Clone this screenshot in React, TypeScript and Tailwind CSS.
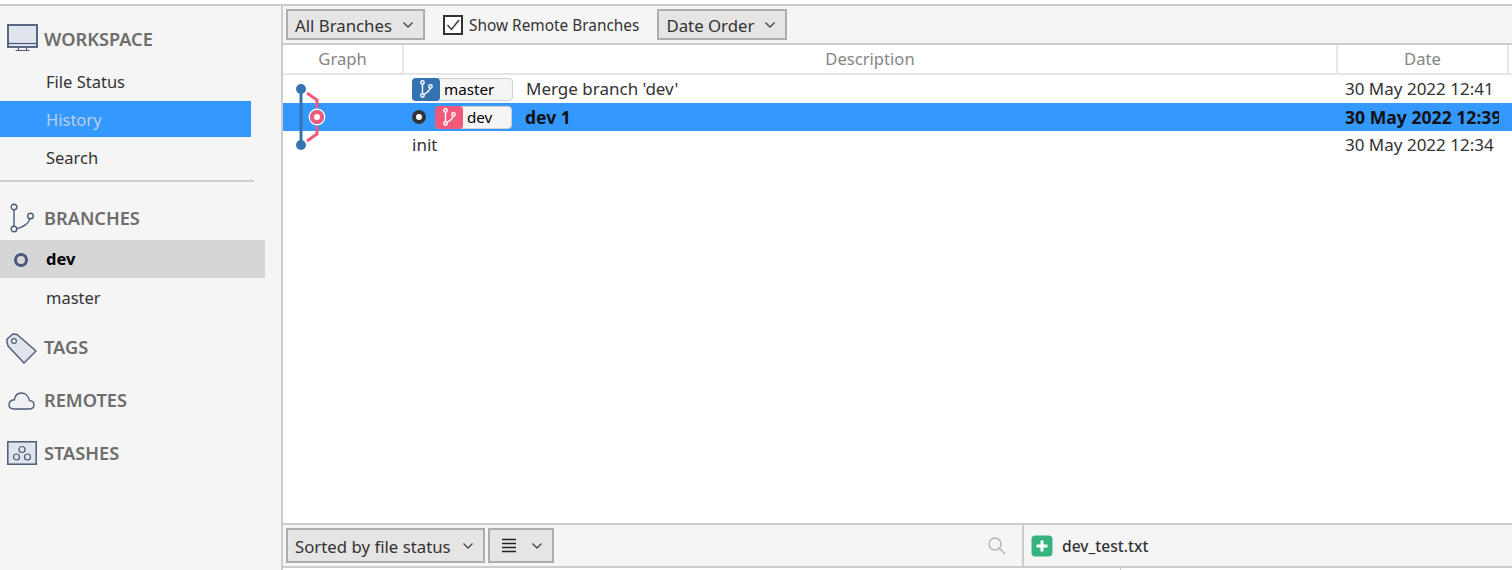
import React from "react";

const font = { fontFamily: '"Noto Sans", "Open Sans", sans-serif' };

const Chevron = ({ className = "" }: { className?: string }) => (
  <svg width="12" height="8" viewBox="0 0 12 8" className={className}>
    <path d="M1.5 1.5 L6 6 L10.5 1.5" fill="none" stroke="#444" strokeWidth="1.3" />
  </svg>
);

const BranchGlyph = ({ color = "#fff" }: { color?: string }) => (
  <svg width="16" height="18" viewBox="0 0 16 18">
    <g fill="none" stroke={color} strokeWidth="1.4">
      <circle cx="4.5" cy="2.5" r="1.7" />
      <circle cx="4.5" cy="15.5" r="1.7" />
      <circle cx="12.5" cy="6.5" r="1.7" />
      <path d="M4.5 4.2 V13.8" />
      <path d="M12 8.2 C11.4 11.5 8.5 13 6 14.4" />
    </g>
  </svg>
);

function SelectBox({ label, className = "" }: { label: string; className?: string }) {
  return (
    <div className={`flex items-center justify-between border-2 border-[#adadad] bg-[#e5e5e5] pl-[7px] text-[#333] ${className}`}>
      <span className="pt-[2px]">{label}</span>
      <Chevron className="mr-[9px]" />
    </div>
  );
}

function SectionHead({ icon, label, className = "" }: { icon: React.ReactNode; label: string; className?: string }) {
  return (
    <div className={`flex items-center ${className}`}>
      <div className="flex w-[44px] shrink-0 justify-center">{icon}</div>
      <span className="text-[18.2px] font-semibold text-[#6d6d6d]">{label}</span>
    </div>
  );
}

function Sidebar() {
  return (
    <aside className="flex w-[281px] shrink-0 flex-col bg-[#f5f5f5] text-[16.5px] text-[#333]">
      <SectionHead
        className="mt-[18px] h-[32px]"
        label="WORKSPACE"
        icon={
          <svg width="31" height="28" viewBox="0 0 31 28" className="mb-[4px] ml-[1px]">
            <rect x="1" y="1" width="29" height="22" fill="#e0e4ec" stroke="#4a5a78" strokeWidth="1.8" />
            <path d="M1 19.5 H30" stroke="#4a5a78" strokeWidth="1.2" />
            <path d="M11.5 23 V26 M19.5 23 V26 M8.5 26.5 H22.5" stroke="#4a5a78" strokeWidth="1.2" />
          </svg>
        }
      />
      <div className="mt-[10px] flex h-[33px] w-[251px] items-center pl-[46px]">File Status</div>
      <div className="mt-[2px] flex h-[36px] w-[251px] items-center bg-[#3399ff] pl-[46px] pt-[2px] text-[#bccce6]">History</div>
      <div className="flex h-[42px] w-[251px] items-center pl-[46px]">Search</div>
      <div className="mt-[1px] h-[2px] w-[254px] bg-[#cfcfcf]" />
      <SectionHead
        className="mt-[20px] h-[34px]"
        label="BRANCHES"
        icon={
          <svg width="26" height="32" viewBox="0 0 26 32" className="-ml-[2px]">
            <g fill="none" stroke="#4a5a78" strokeWidth="1.4">
              <circle cx="6" cy="4" r="2.8" />
              <circle cx="6" cy="26" r="2.8" />
              <circle cx="22.5" cy="13" r="2.8" />
              <path d="M6 6.8 V23.2" />
              <path d="M21.8 15.8 C21 20 15 24.5 8.7 25.6" />
            </g>
          </svg>
        }
      />
      <div className="mt-[4px] flex h-[38px] w-[265px] items-center bg-[#d6d6d6] pt-[1px] font-bold text-black">
        <span className="ml-[14px] mr-[18px] h-[14px] w-[14px] rounded-full border-[3px] border-[#4a5a78]" />
        dev
      </div>
      <div className="flex h-[39px] items-center pl-[46px] pt-[1px]">master</div>
      <SectionHead
        className="mt-[15px] h-[32px]"
        label="TAGS"
        icon={
          <svg width="31" height="31" viewBox="0 0 31 31" className="-ml-[1px]">
            <path d="M1 9 L1 6 L7 1 L11 1.5 L30 18 L18 30 L2 13 Z" fill="#e0e4ec" stroke="#4a5a78" strokeWidth="1.4" strokeLinejoin="round" />
            <circle cx="8" cy="8" r="2.4" fill="#f5f5f5" stroke="#4a5a78" strokeWidth="1.2" />
          </svg>
        }
      />
      <SectionHead
        className="mt-[21px] h-[32px]"
        label="REMOTES"
        icon={
          <svg width="27" height="18" viewBox="0 0 27 18" className="-ml-[1px]">
            <path d="M6 17 H21.5 C24.5 17 26 15 26 12.8 C26 10.5 24.2 8.6 21.5 8.6 C20.5 3.6 17 1 13.5 1 C9.8 1 7 3.6 6.4 7.8 C3 8.2 1 10.3 1 12.8 C1 15.2 3 17 6 17 Z" fill="#f0f1f4" stroke="#4a5a78" strokeWidth="1.4" />
          </svg>
        }
      />
      <SectionHead
        className="mt-[21px] h-[32px]"
        label="STASHES"
        icon={
          <svg width="30" height="24" viewBox="0 0 30 24" className="-ml-[1px] mb-[2px]">
            <rect x="0.8" y="0.8" width="28.4" height="22.4" fill="#e0e4ec" stroke="#4a5a78" strokeWidth="1.5" />
            <g fill="none" stroke="#4a5a78" strokeWidth="1.2">
              <circle cx="15" cy="8.5" r="3" />
              <circle cx="9.5" cy="16" r="3" />
              <circle cx="20.5" cy="16" r="3" />
            </g>
          </svg>
        }
      />
    </aside>
  );
}

function Graph() {
  return (
    <svg width="60" height="84" viewBox="0 0 60 84" className="pointer-events-none absolute left-0 top-0">
      <path d="M18 14 V70" stroke="#3572b0" strokeWidth="3" />
      <path d="M24 18 L34 25 V33 M34 51 V59 L24 66" fill="none" stroke="#f0597a" strokeWidth="3" />
      <circle cx="18" cy="14" r="5" fill="#3572b0" />
      <circle cx="18" cy="70" r="5" fill="#3572b0" />
      <circle cx="34" cy="42" r="7.7" fill="none" stroke="#fff" strokeWidth="1.4" />
      <circle cx="34" cy="42" r="5" fill="#fff" stroke="#f0597a" strokeWidth="4" />
    </svg>
  );
}

function RefTag({ label, color, className = "" }: { label: string; color: string; className?: string }) {
  return (
    <div className={`flex h-[23px] items-center rounded-[4px] border border-[#cfcfcf] bg-[#f5f5f5] ${className}`}>
      <div className="-ml-[1px] flex h-[23px] w-[28px] items-center justify-center rounded-[4px]" style={{ backgroundColor: color }}>
        <BranchGlyph />
      </div>
      <span className="ml-[4px] pt-[2px] text-[15.2px] leading-none text-black">{label}</span>
    </div>
  );
}

function HistoryTable() {
  return (
    <div className="relative flex-1 bg-white text-[17px] text-[#333]">
      <div className="flex h-[30px] border-b-2 border-[#e6e6e6] text-[16.6px] text-[#858585]">
        <div className="flex w-[119px] items-center justify-center">Graph</div>
        <div className="flex flex-1 items-center justify-center border-x-2 border-[#e6e6e6]">Description</div>
        <div className="flex w-[171px] items-center justify-center border-r-2 border-[#e6e6e6]">Date</div>
        <div className="w-[3px]" />
      </div>
      <div className="relative">
        <div className="flex h-[28px] items-center">
          <div className="w-[129px] shrink-0" />
          <RefTag label="master" color="#3572b0" className="w-[101px]" />
          <span className="ml-[13px] flex-1">Merge branch 'dev'</span>
          <span className="w-[167px] shrink-0 overflow-hidden whitespace-nowrap">30 May 2022 12:41</span>
        </div>
        <div className="flex h-[28px] items-center bg-[#3399ff] font-bold text-[#111]">
          <div className="w-[129px] shrink-0" />
          <span className="mr-[9px] h-[14px] w-[14px] rounded-full border-[4px] border-[#333] bg-white" />
          <RefTag label="dev" color="#f0597a" className="w-[77px] font-normal" />
          <span className="ml-[13px] flex-1 text-[17.5px]">dev 1</span>
          <span className="mr-[13px] w-[154px] shrink-0 overflow-hidden whitespace-nowrap text-[17.6px]">30 May 2022 12:39</span>
        </div>
        <div className="flex h-[28px] items-center">
          <div className="w-[129px] shrink-0" />
          <span className="flex-1">init</span>
          <span className="w-[167px] shrink-0 overflow-hidden whitespace-nowrap">30 May 2022 12:34</span>
        </div>
        <Graph />
      </div>
    </div>
  );
}

export default function App() {
  return (
    <div className="h-[570px] w-[1512px] overflow-hidden bg-white" style={font}>
      <div className="h-[4px] bg-white" />
      <div className="flex h-[566px] border-t-2 border-[#cccccc]">
        <Sidebar />
        <main className="flex flex-1 flex-col border-l-2 border-[#cccccc]">
          <div className="flex h-[39px] shrink-0 items-center border-b-2 border-[#cccccc] bg-[#f5f5f5] pl-[3px] text-[16.8px] text-[#333]">
            <SelectBox label="All Branches" className="h-[31px] w-[139px]" />
            <svg width="20" height="20" viewBox="0 0 20 20" className="ml-[18px]">
              <rect x="1" y="1" width="18" height="18" fill="#fff" stroke="#333" strokeWidth="2" />
              <path d="M4.5 10 L8.5 14.5 L16 5" fill="none" stroke="#333" strokeWidth="1.4" />
            </svg>
            <span className="ml-[6px] pt-[2px] text-[15.4px] text-[#333]">Show Remote Branches</span>
            <SelectBox label="Date Order" className="ml-[18px] h-[31px] w-[130px]" />
          </div>
          <HistoryTable />
          <div className="flex h-[45px] shrink-0 border-y-2 border-[#cccccc] bg-[#f5f5f5] text-[16.8px] text-[#333]">
            <div className="flex w-[741px] items-center border-r-2 border-[#cccccc] pl-[3px]">
              <SelectBox label="Sorted by file status" className="h-[35px] w-[199px]" />
              <div className="ml-[3px] flex h-[35px] w-[66px] items-center justify-between border-2 border-[#adadad] bg-[#e5e5e5] pl-[11px]">
                <svg width="16" height="15" viewBox="0 0 16 15">
                  <path d="M1 1.5 H15 M1 5.5 H15 M1 9.5 H15 M1 13.5 H15" stroke="#222" strokeWidth="1.4" />
                </svg>
                <Chevron className="mr-[9px]" />
              </div>
              <svg width="20" height="20" viewBox="0 0 20 20" className="ml-[433px]">
                <circle cx="8" cy="8" r="6" fill="none" stroke="#b5b5b5" strokeWidth="1.5" />
                <path d="M12.5 12.5 L18 18" stroke="#b5b5b5" strokeWidth="1.5" />
              </svg>
            </div>
            <div className="flex flex-1 items-center pl-[7px]">
              <svg width="22" height="22" viewBox="0 0 22 22">
                <rect x="0.5" y="0.5" width="21" height="21" rx="4" fill="#36b37e" />
                <path d="M11 5.5 V16.5 M5.5 11 H16.5" stroke="#fff" strokeWidth="3" />
              </svg>
              <span className="ml-[9px] pt-[3px] text-[15.6px] font-medium">dev_test.txt</span>
            </div>
          </div>
          <div className="flex h-[2px] bg-white">
            <div className="ml-[837px] h-[2px] w-[1px] bg-[#cccccc]" />
          </div>
        </main>
      </div>
    </div>
  );
}
